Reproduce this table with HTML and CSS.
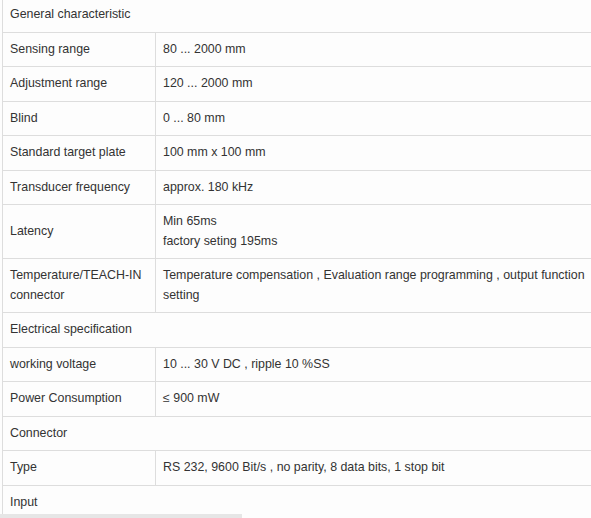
FILE: index.html
```html
<!DOCTYPE html>
<html>
<head>
<meta charset="utf-8">
<link rel="stylesheet" href="styles.css">
</head>
<body>
<div class="wrap">
<table class="spec">
  <colgroup><col class="c1"><col class="c2"></colgroup>
  <tr><td colspan="2">General characteristic</td></tr>
  <tr><td>Sensing range</td><td>80 ... 2000 mm</td></tr>
  <tr><td>Adjustment range</td><td>120 ... 2000 mm</td></tr>
  <tr><td>Blind</td><td>0 ... 80 mm</td></tr>
  <tr><td>Standard target plate</td><td>100 mm x 100 mm</td></tr>
  <tr><td>Transducer frequency</td><td>approx. 180 kHz</td></tr>
  <tr><td>Latency</td><td>Min 65ms<br>factory seting 195ms</td></tr>
  <tr><td>Temperature/TEACH-IN connector</td><td>Temperature compensation , Evaluation range programming , output function setting</td></tr>
  <tr><td colspan="2">Electrical specification</td></tr>
  <tr><td>working voltage</td><td>10 ... 30 V DC , ripple 10 %SS</td></tr>
  <tr><td>Power Consumption</td><td>≤ 900 mW</td></tr>
  <tr><td colspan="2">Connector</td></tr>
  <tr><td>Type</td><td>RS 232, 9600 Bit/s , no parity, 8 data bits, 1 stop bit</td></tr>
  <tr><td colspan="2">Input</td></tr>
</table>
</div>
<div class="scrollbar"></div>
</body>
</html>
```
FILE: styles.css
```css
html, body {
  margin: 0;
  padding: 0;
  background: #fdfdfd;
  overflow: hidden;
  width: 591px;
  height: 518px;
}
.wrap {
  padding-left: 2px;
  margin-top: -3px;
  width: 589px;
  overflow: hidden;
}
.spec {
  border-collapse: collapse;
  table-layout: fixed;
  width: 605px;
  font-family: "Liberation Sans", Arial, sans-serif;
  font-size: 12.4px;
  color: #333;
}
.c1 { width: 153px; }
.c2 { width: 452px; }
.spec td {
  border: 1px solid #dddddd;
  padding: 7px 7px;
  line-height: 19.5px;
  vertical-align: middle;
  text-align: left;
}
.scrollbar {
  position: fixed;
  left: 0;
  bottom: 0;
  width: 242px;
  height: 4px;
  background: #e6e6e6;
}
```
